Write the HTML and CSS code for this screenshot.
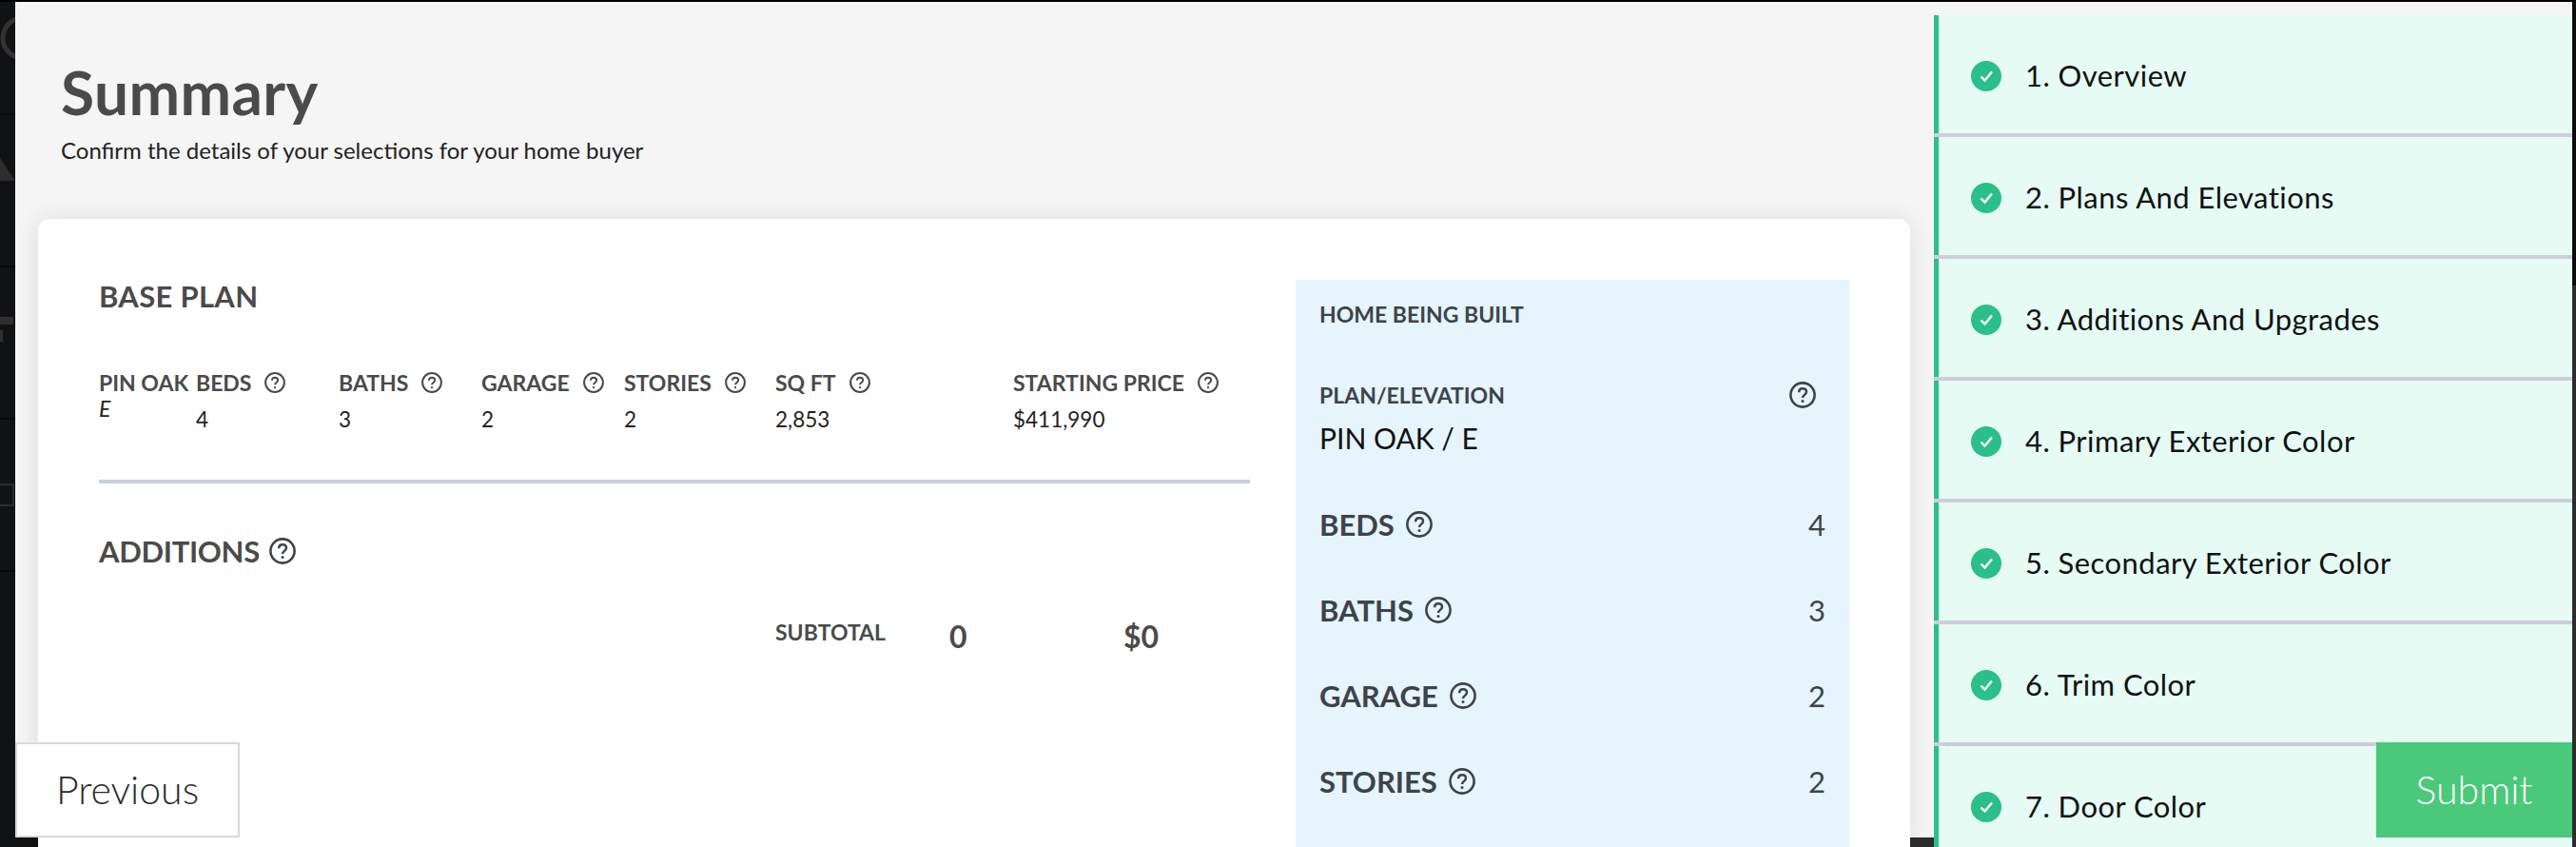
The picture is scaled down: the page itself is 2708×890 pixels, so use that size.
FILE: index.html
```html
<!DOCTYPE html>
<html>
<head>
    <title>Summary</title>
    <link rel="stylesheet" href="styles.css">
</head>
<body>
    <svg width="0" height="0" class="icon-defs">
        <symbol id="help" viewBox="0 0 26 26">
            <circle cx="13" cy="13" r="11.7" fill="none" stroke="currentColor" stroke-width="2.4"/>
            <path d="M9.4 10.4c0-2.2 1.6-3.6 3.7-3.6s3.6 1.3 3.6 3.2c0 2.9-3.7 2.9-3.7 5.8" fill="none" stroke="currentColor" stroke-width="2.3"/>
            <circle cx="13" cy="19" r="1.4" fill="currentColor"/>
        </symbol>
        <symbol id="check" viewBox="0 0 32 32">
            <circle cx="16" cy="16" r="16" fill="#2bbf8a"/>
            <path d="M10.5 16.5l4 4 7.5-9" fill="none" stroke="#fff" stroke-width="2.4"/>
        </symbol>
    </svg>

    <!-- the dimmed page sticking out behind the modal -->
    <div class="backdrop-nav">
        <div class="backdrop-item">
            <svg width="16" height="120"><circle cx="24" cy="40" r="21" fill="none" stroke="#333" stroke-width="5"/></svg>
        </div>
        <div class="backdrop-item">
            <svg width="16" height="160"><path d="M0 45l16 24h-16z" fill="#2e2e2e"/></svg>
        </div>
        <div class="backdrop-item">
            <svg width="16" height="160"><path d="M0 52h14v8h-14zM0 66h3v12h-3z" fill="#303030"/></svg>
        </div>
        <div class="backdrop-item">
            <svg width="16" height="160"><path d="M0 68h14v22h-14" fill="none" stroke="#2c2c2c" stroke-width="2"/></svg>
        </div>
    </div>

    <div class="app">
        <main class="summary">
            <header class="summary-head">
                <h1>Summary</h1>
                <p>Confirm the details of your selections for your home buyer</p>
            </header>

            <section class="card">
                <div class="card-left">
                    <h2 class="section-title">BASE PLAN</h2>
                    <div class="plan-grid">
                        <div>
                            <div class="plan-label">PIN OAK</div>
                            <div class="plan-elevation">E</div>
                        </div>
                        <div>
                            <div class="plan-label">BEDS <svg class="help-sm"><use href="#help"/></svg></div>
                            <div class="plan-value">4</div>
                        </div>
                        <div>
                            <div class="plan-label">BATHS <svg class="help-sm"><use href="#help"/></svg></div>
                            <div class="plan-value">3</div>
                        </div>
                        <div>
                            <div class="plan-label">GARAGE <svg class="help-sm"><use href="#help"/></svg></div>
                            <div class="plan-value">2</div>
                        </div>
                        <div>
                            <div class="plan-label">STORIES <svg class="help-sm"><use href="#help"/></svg></div>
                            <div class="plan-value">2</div>
                        </div>
                        <div>
                            <div class="plan-label">SQ FT <svg class="help-sm"><use href="#help"/></svg></div>
                            <div class="plan-value">2,853</div>
                        </div>
                        <div>
                            <div class="plan-label">STARTING PRICE <svg class="help-sm"><use href="#help"/></svg></div>
                            <div class="plan-value">$411,990</div>
                        </div>
                    </div>
                    <hr class="divider">
                    <h2 class="section-title additions">ADDITIONS <svg class="help-lg"><use href="#help"/></svg></h2>
                    <div class="subtotal">
                        <span class="subtotal-label">SUBTOTAL</span>
                        <span class="subtotal-count">0</span>
                        <span class="subtotal-price">$0</span>
                    </div>
                </div>

                <aside class="home-panel">
                    <h3>HOME BEING BUILT</h3>
                    <div class="elevation-row">
                        <span>PLAN/ELEVATION</span>
                        <svg class="help-lg"><use href="#help"/></svg>
                    </div>
                    <div class="elevation-value">PIN OAK / E</div>
                    <div class="home-row">
                        <span class="home-key">BEDS <svg class="help-lg"><use href="#help"/></svg></span>
                        <span class="home-num">4</span>
                    </div>
                    <div class="home-row">
                        <span class="home-key">BATHS <svg class="help-lg"><use href="#help"/></svg></span>
                        <span class="home-num">3</span>
                    </div>
                    <div class="home-row">
                        <span class="home-key">GARAGE <svg class="help-lg"><use href="#help"/></svg></span>
                        <span class="home-num">2</span>
                    </div>
                    <div class="home-row">
                        <span class="home-key">STORIES <svg class="help-lg"><use href="#help"/></svg></span>
                        <span class="home-num">2</span>
                    </div>
                </aside>
            </section>
        </main>

        <nav class="steps">
            <a class="step"><svg class="step-icon"><use href="#check"/></svg>1. Overview</a>
            <a class="step"><svg class="step-icon"><use href="#check"/></svg>2. Plans And Elevations</a>
            <a class="step"><svg class="step-icon"><use href="#check"/></svg>3. Additions And Upgrades</a>
            <a class="step"><svg class="step-icon"><use href="#check"/></svg>4. Primary Exterior Color</a>
            <a class="step"><svg class="step-icon"><use href="#check"/></svg>5. Secondary Exterior Color</a>
            <a class="step"><svg class="step-icon"><use href="#check"/></svg>6. Trim Color</a>
            <a class="step"><svg class="step-icon"><use href="#check"/></svg>7. Door Color</a>
        </nav>
    </div>

    <button class="btn-previous">Previous</button>
    <button class="btn-submit">Submit</button>
</body>
</html>
```

FILE: styles.css
```css
* {
    box-sizing: border-box;
}

html, body {
    height: 100%;
}

body {
    margin: 0;
    background:
        linear-gradient(#000, #000) left top / 100% 2px no-repeat,
        linear-gradient(#0b0b0b, #0b0b0b) right top / 4px 300px no-repeat,
        linear-gradient(to right, #101214 1000px, #2c2c2c 1000px);
    font-family: Lato, "Open Sans", Arial, sans-serif;
    overflow: hidden;
    position: relative;
}

.icon-defs {
    display: block;
    height: 0;
}

.backdrop-nav {
    position: absolute;
    left: 0;
    top: 0;
    width: 16px;
}

.backdrop-item {
    height: 160px;
    border-bottom: 2px solid #08090a;
    overflow: hidden;
}

.backdrop-item:first-child {
    height: 121px;
}

.backdrop-item svg {
    display: block;
}

.app {
    display: flex;
    height: 890px;
    padding: 2px 4px 0 16px;
}

.summary {
    width: 2017px;
    height: 878px;
    flex-shrink: 0;
    background-color: #f5f5f5;
}

.summary-head {
    height: 228px;
    padding: 56px 0 0 48px;
}

.summary-head h1 {
    margin: 0;
    font-size: 64px;
    line-height: 78px;
    font-weight: 700;
    letter-spacing: 0.4px;
    color: #4a4a4a;
}

.summary-head p {
    margin: 8px 0 0;
    font-size: 24px;
    line-height: 28px;
    color: #222;
}

.card {
    display: flex;
    margin-left: 24px;
    width: 1968px;
    height: 660px;
    padding: 63px 64px 0 64px;
    background-color: #fff;
    border-radius: 12px 12px 0 0;
    box-shadow: 0 0 24px rgba(0, 0, 0, 0.1);
}

.card-left {
    width: 1210px;
    margin-right: 48px;
    flex-shrink: 0;
}

.section-title {
    margin: 0;
    font-size: 31px;
    line-height: 36px;
    font-weight: 700;
    letter-spacing: 0.3px;
    color: #4a4a4a;
}

.plan-grid {
    display: grid;
    grid-template-columns: 102px 150px 150px 150px 159px 250px 1fr;
    margin-top: 59px;
}

.plan-label {
    font-size: 23px;
    line-height: 28px;
    font-weight: 700;
    color: #4a4a4a;
    white-space: nowrap;
    display: flex;
    align-items: center;
    gap: 14px;
}

.plan-value {
    margin-top: 12px;
    font-size: 22.5px;
    line-height: 26px;
    color: #222;
}

.plan-elevation {
    font-size: 23px;
    line-height: 26px;
    font-style: italic;
    color: #222;
}

.help-sm {
    width: 22px;
    height: 22px;
    color: #4a4a4a;
    flex-shrink: 0;
}

.help-lg {
    width: 28px;
    height: 28px;
    color: #3e4349;
    flex-shrink: 0;
}

.divider {
    height: 4px;
    margin: 50px 0 0;
    border: 0;
    background-color: #c5cfe0;
}

.additions {
    display: flex;
    align-items: center;
    gap: 10px;
    margin-top: 53px;
    letter-spacing: -0.3px;
}

.subtotal {
    display: flex;
    margin: 52px 0 0 711px;
    align-items: center;
    color: #4a4a4a;
    font-weight: 700;
}

.subtotal-label {
    width: 183px;
    font-size: 23px;
    margin-top: -10px;
}

.subtotal-count {
    width: 183px;
    font-size: 32px;
}

.subtotal-price {
    font-size: 32px;
}

.home-panel {
    width: 582px;
    height: 600px;
    margin-top: 1px;
    padding: 22px 25px 0;
    background-color: #e5f4fd;
    color: #3e4349;
}

.home-panel h3 {
    margin: 0;
    font-size: 23px;
    line-height: 28px;
    font-weight: 700;
}

.elevation-row {
    display: flex;
    justify-content: space-between;
    align-items: center;
    margin-top: 57px;
    padding-right: 10px;
    font-size: 23px;
    font-weight: 700;
}

.elevation-value {
    margin-top: 13px;
    font-size: 30px;
    line-height: 36px;
    color: #111;
}

.home-row {
    display: flex;
    justify-content: space-between;
    align-items: center;
    height: 90px;
    font-size: 31px;
}

.elevation-value + .home-row {
    margin-top: 28px;
}

.home-key {
    display: flex;
    align-items: center;
    gap: 12px;
    font-weight: 700;
}

.steps {
    flex: 1;
    padding-top: 14px;
    background-color: #f5f5f5;
    height: 878px;
}

.step {
    display: flex;
    align-items: center;
    gap: 25px;
    height: 128px;
    padding: 2px 0 0 39px;
    background: linear-gradient(#2bbf8a, #2bbf8a) left top / 5px 100% no-repeat, #e5fbf4;
    border-bottom: 4px solid #cdced8;
    font-size: 31px;
    letter-spacing: 0.45px;
    color: #111;
}

.step-icon {
    width: 32px;
    height: 32px;
    flex-shrink: 0;
    margin-top: 2px;
}

.btn-previous,
.btn-submit {
    position: absolute;
    top: 780px;
    height: 100px;
    padding: 0 0 2px;
    font-family: inherit;
    font-size: 41px;
    font-weight: 300;
    cursor: pointer;
}

.btn-previous {
    left: 16px;
    width: 236px;
    background-color: #fff;
    border: 2px solid #d9d9d9;
    color: #2a2a2a;
}

.btn-submit {
    left: 2498px;
    width: 206px;
    background-color: #4ac97b;
    border: 0;
    color: #fff;
}
```
